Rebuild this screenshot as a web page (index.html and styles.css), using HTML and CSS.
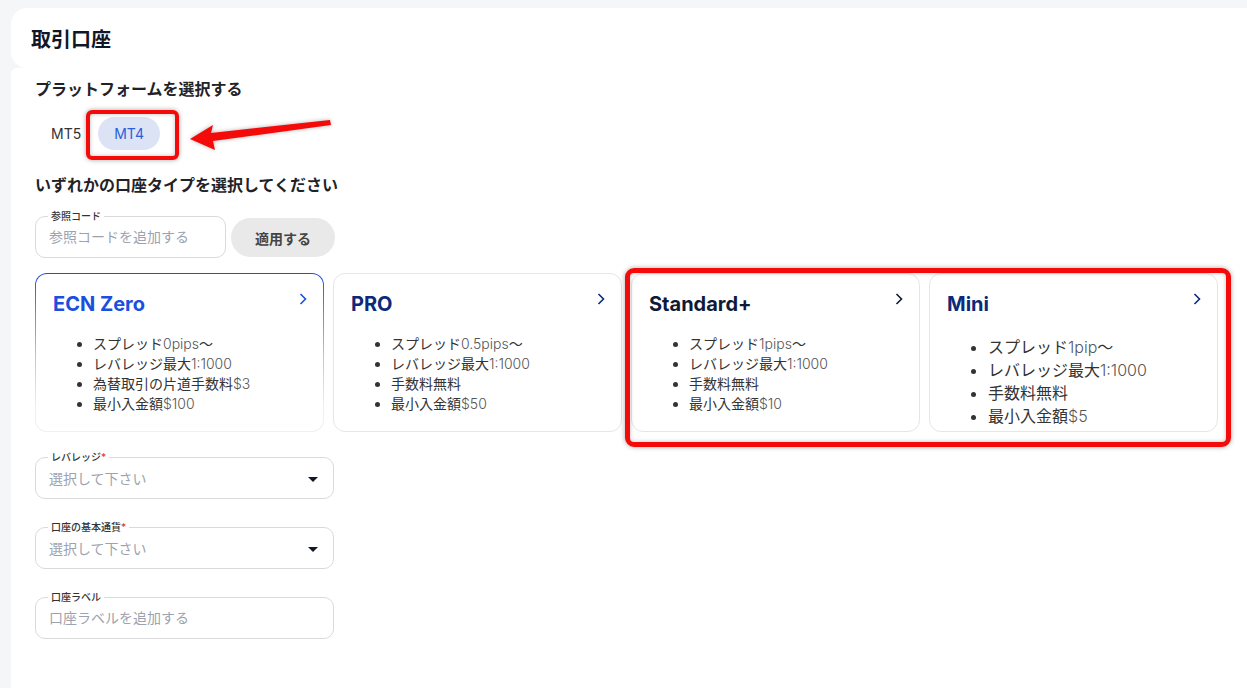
FILE: index.html
```html
<!DOCTYPE html>
<html lang="ja">
<head>
    <meta charset="UTF-8">
    <title>取引口座</title>
    <link rel="stylesheet" href="styles.css">
</head>
<body>
    <div class="page">
        <div class="page-header">
            <h1 class="page-title">取引口座</h1>
        </div>

        <div class="panel">
            <h2 class="section-title">プラットフォームを選択する</h2>
            <div class="platform-tabs">
                <button class="tab">MT5</button>
                <button class="tab tab-active">MT4</button>
            </div>

            <h2 class="section-title section-title-account">いずれかの口座タイプを選択してください</h2>
            <div class="ref-row">
                <fieldset class="field field-ref">
                    <legend>参照コード</legend>
                    <div class="field-value">参照コードを追加する</div>
                </fieldset>
                <button class="apply-btn">適用する</button>
            </div>

            <div class="cards">
                <div class="card card-selected">
                    <div class="card-head">
                        <div class="card-title title-blue">ECN Zero</div>
                        <svg class="chevron" width="8" height="12" viewBox="0 0 8 12"><path d="M1.5 1 L6.5 6 L1.5 11" fill="none" stroke="#1a4fe0" stroke-width="1.6"/></svg>
                    </div>
                    <ul class="card-list">
                        <li>スプレッド<span class="num">0pips</span>〜</li>
                        <li>レバレッジ最大<span class="num">1:1000</span></li>
                        <li>為替取引の片道手数料<span class="num">$3</span></li>
                        <li>最小入金額<span class="num">$100</span></li>
                    </ul>
                </div>
                <div class="card">
                    <div class="card-head">
                        <div class="card-title title-navy">PRO</div>
                        <svg class="chevron" width="8" height="12" viewBox="0 0 8 12"><path d="M1.5 1 L6.5 6 L1.5 11" fill="none" stroke="#0d2a7a" stroke-width="1.6"/></svg>
                    </div>
                    <ul class="card-list">
                        <li>スプレッド<span class="num">0.5pips</span>〜</li>
                        <li>レバレッジ最大<span class="num">1:1000</span></li>
                        <li>手数料無料</li>
                        <li>最小入金額<span class="num">$50</span></li>
                    </ul>
                </div>
                <div class="card">
                    <div class="card-head">
                        <div class="card-title title-dark">Standard+</div>
                        <svg class="chevron" width="8" height="12" viewBox="0 0 8 12"><path d="M1.5 1 L6.5 6 L1.5 11" fill="none" stroke="#0f1a3a" stroke-width="1.6"/></svg>
                    </div>
                    <ul class="card-list">
                        <li>スプレッド<span class="num">1pips</span>〜</li>
                        <li>レバレッジ最大<span class="num">1:1000</span></li>
                        <li>手数料無料</li>
                        <li>最小入金額<span class="num">$10</span></li>
                    </ul>
                </div>
                <div class="card">
                    <div class="card-head">
                        <div class="card-title title-navy">Mini</div>
                        <svg class="chevron" width="8" height="12" viewBox="0 0 8 12"><path d="M1.5 1 L6.5 6 L1.5 11" fill="none" stroke="#0d2a7a" stroke-width="1.6"/></svg>
                    </div>
                    <ul class="card-list card-list-large">
                        <li>スプレッド<span class="num">1pip</span>〜</li>
                        <li>レバレッジ最大<span class="num">1:1000</span></li>
                        <li>手数料無料</li>
                        <li>最小入金額<span class="num">$5</span></li>
                    </ul>
                </div>
            </div>

            <div class="form">
                <fieldset class="field">
                    <legend>レバレッジ<span class="req">*</span></legend>
                    <div class="field-value field-select">
                        <span>選択して下さい</span>
                        <span class="caret"></span>
                    </div>
                </fieldset>
                <fieldset class="field">
                    <legend>口座の基本通貨<span class="req">*</span></legend>
                    <div class="field-value field-select">
                        <span>選択して下さい</span>
                        <span class="caret"></span>
                    </div>
                </fieldset>
                <fieldset class="field">
                    <legend>口座ラベル</legend>
                    <div class="field-value">口座ラベルを追加する</div>
                </fieldset>
            </div>
        </div>
    </div>

    <!-- annotations -->
    <div class="mark mark-tab"></div>
    <svg class="mark-arrow" width="150" height="40" viewBox="185 115 150 40">
        <polygon points="190,139 213,125 211,133 330,120 331,125 213,141 215,150" fill="#f50a0a"/>
    </svg>
    <div class="mark mark-cards"></div>
</body>
</html>
```

FILE: styles.css
```css
* {
    box-sizing: border-box;
}
body {
    margin: 0;
    background: #f5f6f8;
    color: #222;
    font-family: Inter, "Noto Sans CJK JP", sans-serif;
}
.page {
    padding: 8px 0 0 11px;
    min-height: 688px;
    display: flex;
    flex-direction: column;
}
.page-header {
    height: 60px;
    background: #fff;
    border-radius: 16px 0 0 16px;
    padding-left: 20px;
    display: flex;
    align-items: center;
}
.page-title {
    margin: 0;
    font-size: 20px;
    font-weight: 700;
    color: #0f172a;
}
.panel {
    flex: 1;
    background: #fff;
    border-top-left-radius: 6px;
    padding: 9px 0 0 24px;
}
.section-title {
    margin: 0;
    font-size: 16px;
    line-height: 24px;
    font-weight: 700;
    color: #1f2328;
}
.section-title-account {
    margin-top: 23px;
}
.platform-tabs {
    display: flex;
    gap: 1px;
    margin-top: 16px;
}
.tab {
    height: 33px;
    padding: 0 16px;
    border: none;
    border-radius: 17px;
    background: transparent;
    font-family: inherit;
    font-size: 14px;
    color: #333;
}
.tab-active {
    background: #dbe3f5;
    color: #2b5fd9;
}
.ref-row {
    display: flex;
    align-items: flex-end;
    gap: 5px;
    margin-top: 12px;
}
.field {
    margin: 0;
    width: 299px;
    border: 1px solid #dadada;
    border-radius: 10px;
    padding: 0 12px 4px;
}
.field-ref {
    width: 191px;
}
.field legend {
    padding: 0 3px;
    font-size: 10px;
    line-height: 14px;
    font-weight: 500;
    color: #333;
}
.req {
    color: #e23b3b;
}
.field-value {
    height: 30px;
    line-height: 28px;
    padding-left: 1px;
    font-size: 14px;
    color: #9ca3af;
}
.field-select {
    display: flex;
    justify-content: space-between;
    align-items: center;
}
.caret {
    width: 0;
    height: 0;
    margin-right: 3px;
    border-left: 5px solid transparent;
    border-right: 5px solid transparent;
    border-top: 5px solid #111827;
}
.apply-btn {
    width: 104px;
    height: 39px;
    margin-bottom: 1px;
    border: none;
    border-radius: 20px;
    background: #e9e9e9;
    font-family: inherit;
    font-size: 14px;
    font-weight: 700;
    color: #444;
}
.cards {
    display: grid;
    grid-template-columns: repeat(4, 289px);
    gap: 9px;
    margin-top: 15px;
}
.card {
    height: 159px;
    border: 1px solid #e6e6e9;
    border-radius: 12px;
    padding: 17px 16px 0 17px;
    background: #fff;
}
.card-selected {
    border: 1px solid transparent;
    background: linear-gradient(#fff, #fff) padding-box,
                linear-gradient(#1a4fe0 0%, #b9c9f5 55%, #f0f0f3 85%) border-box;
}
.card-head {
    display: flex;
    justify-content: space-between;
    align-items: flex-start;
}
.card-title {
    font-size: 20px;
    line-height: 26px;
    font-weight: 700;
}
.chevron {
    margin-top: 2px;
}
.title-blue {
    color: #1a4fe0;
}
.title-navy {
    color: #0d2a7a;
}
.title-dark {
    color: #0f1a3a;
}
.card-list {
    margin: 17px 0 0;
    padding-left: 40px;
    font-size: 14px;
    line-height: 20px;
    color: #333;
}
.card-list .num {
    color: #555;
    font-weight: 300;
}
.card-list-large {
    margin-top: 19px;
    padding-left: 41px;
    font-size: 16px;
    line-height: 23px;
}
.form {
    display: flex;
    flex-direction: column;
    gap: 21px;
    margin-top: 18px;
}
.mark {
    position: absolute;
    border: 4px solid #f50a0a;
    border-radius: 6px;
    box-shadow: 0 0 5px rgba(0, 0, 0, 0.35), inset 0 0 4px rgba(0, 0, 0, 0.25);
    pointer-events: none;
}
.mark-tab {
    left: 86px;
    top: 110px;
    width: 93px;
    height: 50px;
}
.mark-cards {
    left: 625px;
    top: 268px;
    width: 606px;
    height: 179px;
    border-width: 5px;
    border-radius: 9px;
}
.mark-arrow {
    position: absolute;
    left: 185px;
    top: 115px;
    filter: drop-shadow(0 0 2px rgba(0, 0, 0, 0.3));
}
```
